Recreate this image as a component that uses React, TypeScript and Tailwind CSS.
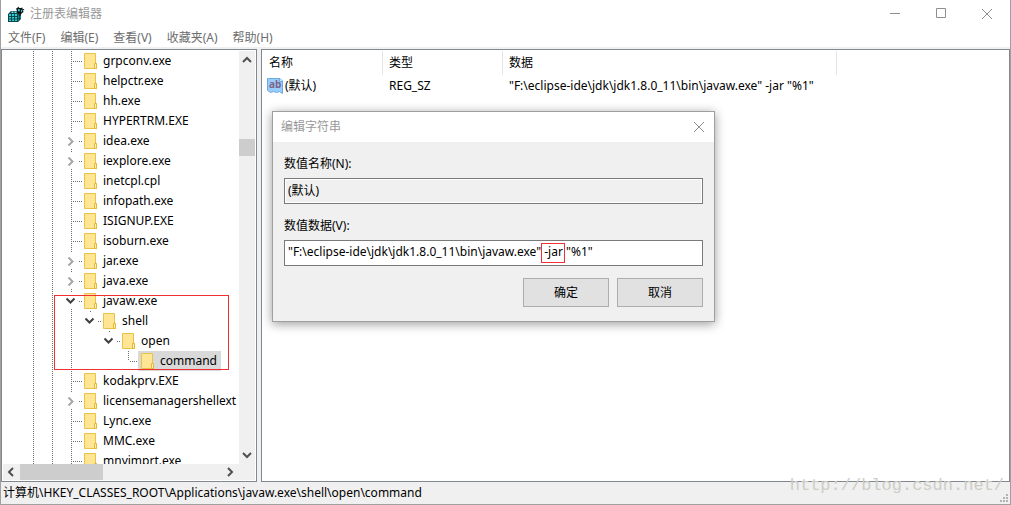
import React, { useState } from 'react';

type Expander = 'none' | 'closed' | 'open';

interface TreeNode {
   name: string;
   depth: number;
   expander: Expander;
   last?: boolean;
   // columns left of this node that still carry a vertical line
   lines: boolean[];
}

const node = (name: string, expander: Expander = 'none'): TreeNode => ({
   name,
   depth: 0,
   expander,
   lines: [true, true],
});

const nodes: TreeNode[] = [
   node('grpconv.exe'),
   node('helpctr.exe'),
   node('hh.exe'),
   node('HYPERTRM.EXE'),
   node('idea.exe', 'closed'),
   node('iexplore.exe', 'closed'),
   node('inetcpl.cpl'),
   node('infopath.exe'),
   node('ISIGNUP.EXE'),
   node('isoburn.exe'),
   node('jar.exe', 'closed'),
   node('java.exe', 'closed'),
   node('javaw.exe', 'open'),
   { name: 'shell', depth: 1, expander: 'open', last: true, lines: [true, true, true] },
   { name: 'open', depth: 2, expander: 'open', last: true, lines: [true, true, true, false] },
   { name: 'command', depth: 3, expander: 'none', last: true, lines: [true, true, true, false, false] },
   node('kodakprv.EXE'),
   node('licensemanagershellext', 'closed'),
   node('Lync.exe'),
   node('MMC.exe'),
   node('mnyimprt.exe'),
];

const menus = ['文件(F)', '编辑(E)', '查看(V)', '收藏夹(A)', '帮助(H)'];

const RegeditIcon = () => (
   <svg viewBox="0 0 17 17" className="h-[17px] w-[17px]" aria-hidden="true">
      <path d="M0 8L3 5H9L10 8L13 9V13L10 16H0Z" fill="#0f4347" />
      <path d="M3.5 5.5H5.5V7H3.5ZM6.5 5.5H8.5V7H6.5Z" fill="#7fe3e6" />
      <path d="M1 8H3V10H1ZM4 8H6V10H4ZM7 8H9V10H7ZM1 11H3V12.5H1ZM4 11H6V12.5H4ZM7 11H9V12.5H7ZM1 13.5H3V15H1ZM4 13.5H6V15H4ZM7 13.5H9V15H7Z" fill="#22d3da" />
      <path d="M10 9.5H11V12H10ZM10 13H11V14.5H10ZM12 10H13V12.5H12Z" fill="#0b8f96" />
      <path d="M8 2.5L9.5 2L10 0.5L11.5 2H13L14.5 1.5V3H16.5L15 4.5L15.5 6L13.5 7.5L12.5 9.5L11 8.5L9 7V5Z" fill="#0a1416" />
      <path d="M10 3L12 3.5L11.5 5.5L10 5ZM13 4L14.5 3.5L14 5.5L13 6.5Z" fill="#35d3da" />
   </svg>
);

const FolderIcon = () => (
   <svg viewBox="0 0 13 16" className="ml-[3px] h-4 w-[13px] shrink-0" aria-hidden="true">
      <path d="M0.5 0.5H11.5V10.5H12.5V15.5H0.5Z" fill="#ffe594" stroke="#e8c34a" />
      <path d="M10.5 15V10.5H12.5V15.5H10.5Z" fill="#fff0b8" stroke="#e5b934" />
   </svg>
);

const StringValueIcon = () => (
   <svg viewBox="0 0 16 16" className="h-4 w-4 shrink-0" aria-hidden="true">
      <path d="M0.5 0.5H13L15.5 3V15.5L12.5 13.5L9.5 14.5L6.5 13.5L3.5 14.5L0.5 12.5Z" fill="#99ccff" stroke="#6ca9dd" />
      <path d="M12.5 0.5V3.5H15.5" fill="#d5eaff" stroke="#6ca9dd" />
      <text x="2" y="10" fontSize="10" fontWeight="700" fill="#7d6488" fontFamily="Noto Sans, sans-serif">ab</text>
   </svg>
);

const CloseIcon = () => (
   <svg viewBox="0 0 12 12" className="h-3 w-3" fill="none" stroke="#8f8f8f" aria-hidden="true">
      <path d="M1 1L11 11M11 1L1 11" />
   </svg>
);

interface ArrowProps {
   d: string;
}

const ScrollArrow: React.FC<ArrowProps> = ({ d }) => (
   <svg viewBox="0 0 16 16" className="h-4 w-4" fill="none" stroke="#505050" strokeWidth="2" aria-hidden="true">
      <path d={d} />
   </svg>
);

const LineCell = ({ visible }: { visible: boolean }) => (
   <svg viewBox="0 0 19 20" className="h-5 w-[19px] shrink-0" aria-hidden="true">
      {visible && <path d="M9.5 0V20" stroke="#6e6e6e" strokeDasharray="1 1" />}
   </svg>
);

// Connector cell right before the folder, with the expand arrow
const Branch = ({ expander, last, isRoot }: { expander: Expander; last?: boolean; isRoot: boolean }) => {
   const dots = { stroke: '#6e6e6e', strokeDasharray: '1 1' };

   return (
      <svg viewBox="0 0 19 20" className="h-5 w-[19px] shrink-0 overflow-visible" fill="none" aria-hidden="true">
         {expander === 'none' ? (
            <>
               <path d={last ? 'M9.5 0V10' : 'M9.5 0V20'} {...dots} />
               <path d="M11 10.5H20" {...dots} />
            </>
         ) : (
            <>
               <path d="M9.5 0V2" {...dots} />
               {isRoot && <path d="M9.5 18V20" {...dots} />}
               <path d="M17 10.5H20" {...dots} />
               {expander === 'closed' ? (
                  <path d="M6.5 6.5L10.5 10.5L6.5 14.5" stroke="#a6a6a6" strokeWidth="2" />
               ) : (
                  <path d="M4.5 7.5L8.5 11.5L12.5 7.5" stroke="#404040" strokeWidth="2" />
               )}
            </>
         )}
      </svg>
   );
};

interface TreeRowProps {
   item: TreeNode;
   selected: boolean;
   onSelect: () => void;
}

const TreeRow: React.FC<TreeRowProps> = ({ item, selected, onSelect }) => (
   <li
      role="treeitem"
      aria-level={item.depth + 1}
      aria-selected={selected}
      aria-expanded={item.expander === 'none' ? undefined : item.expander === 'open'}
      onClick={onSelect}
      className="flex h-5 items-center whitespace-nowrap"
   >
      {item.lines.map((visible, i) => (
         <LineCell key={i} visible={visible} />
      ))}
      <Branch expander={item.expander} last={item.last} isRoot={item.depth === 0} />
      <span className={`flex h-5 items-center pr-1 ${selected ? 'bg-[#d9d9d9]' : ''}`}>
         <FolderIcon />
         <span className="ml-1.5">{item.name}</span>
      </span>
   </li>
);

const RegistryTree = () => {
   const [selected, setSelected] = useState('command');

   return (
      <nav className="flex w-64 shrink-0 flex-col border border-[#828790] bg-white p-px">
         <div className="flex min-h-0 flex-1">
            <div className="relative min-w-0 flex-1 overflow-hidden">
               <ul role="tree" aria-label="注册表项" className="pl-[21px]">
                  {nodes.map((item) => (
                     <TreeRow
                        key={item.name}
                        item={item}
                        selected={selected === item.name}
                        onSelect={() => setSelected(item.name)}
                     />
                  ))}
               </ul>
               <div className="pointer-events-none absolute top-[244px] left-[51px] h-[75px] w-[175px] border border-[#f03030]" />
            </div>
            <div className="flex w-4 flex-col bg-[#f0f0f0]">
               <button type="button" aria-label="向上滚动" className="h-4">
                  <ScrollArrow d="M4 11L8 7L12 11" />
               </button>
               <div className="flex-1 pt-[72px]">
                  <div className="h-[17px] bg-[#cdcdcd]" />
               </div>
               <button type="button" aria-label="向下滚动" className="h-4">
                  <ScrollArrow d="M4 5L8 9L12 5" />
               </button>
            </div>
         </div>
         <div className="flex h-4 bg-[#f0f0f0] pr-4">
            <button type="button" aria-label="向左滚动" className="w-4">
               <ScrollArrow d="M10 4L6 8L10 12" />
            </button>
            <div className="flex-1 pl-px">
               <div className="h-4 w-[83px] bg-[#cdcdcd]" />
            </div>
            <button type="button" aria-label="向右滚动" className="w-4">
               <ScrollArrow d="M5 4L9 8L5 12" />
            </button>
         </div>
      </nav>
   );
};

const ValueTable = () => (
   <table className="w-full table-fixed border-separate border-spacing-0 text-left whitespace-nowrap">
      <colgroup>
         <col className="w-[121px]" />
         <col className="w-[120px]" />
         <col className="w-[334px]" />
         <col />
      </colgroup>
      <thead>
         <tr className="h-6">
            <th className="border-r border-[#e5e5e5] pl-[7px] font-normal">名称</th>
            <th className="border-r border-[#e5e5e5] pl-1.5 font-normal">类型</th>
            <th className="border-r border-[#e5e5e5] pl-1.5 font-normal">数据</th>
            <td />
         </tr>
      </thead>
      <tbody>
         <tr className="h-[22px]">
            <td className="pl-[5px]">
               <span className="flex items-center gap-0.5">
                  <StringValueIcon />
                  (默认)
               </span>
            </td>
            <td className="pl-1.5">REG_SZ</td>
            <td className="pl-1.5">"F:\eclipse-ide\jdk\jdk1.8.0_11\bin\javaw.exe" -jar "%1"</td>
            <td />
         </tr>
      </tbody>
   </table>
);

const EditStringDialog = () => {
   const [value, setValue] = useState('"F:\\eclipse-ide\\jdk\\jdk1.8.0_11\\bin\\javaw.exe" -jar "%1"');

   return (
      <div
         role="dialog"
         aria-label="编辑字符串"
         className="absolute top-[61px] left-2.5 w-[443px] border border-[#9f9f9f] bg-[#f0f0f0] shadow-[0_2px_10px_rgba(0,0,0,0.4)]"
      >
         <div className="flex h-[30px] items-center justify-between bg-white pr-[9px] pl-2">
            <h2 className="text-[#999]">编辑字符串</h2>
            <button type="button" aria-label="关闭">
               <CloseIcon />
            </button>
         </div>
         <form className="flex flex-col px-[11px] pt-3 pb-3.5" onSubmit={(e) => e.preventDefault()}>
            <label htmlFor="value-name" className="h-6 leading-5">数值名称(N):</label>
            <input
               id="value-name"
               readOnly
               value="(默认)"
               className="h-[26px] border border-[#7a7a7a] bg-[#f0f0f0] px-[3px] pb-[3px] shadow-[inset_0_0_0_1px_#fff] outline-none"
            />
            <label htmlFor="value-data" className="mt-3 h-6 leading-5">数值数据(V):</label>
            <div className="relative flex">
               <input
                  id="value-data"
                  value={value}
                  onChange={(e) => setValue(e.target.value)}
                  className="h-[26px] flex-1 border border-[#7a7a7a] bg-white px-[3px] pb-[3px] outline-none"
               />
               <div className="pointer-events-none absolute top-[3px] left-[257px] h-5 w-6 border border-[#f03030]" />
            </div>
            <div className="mt-3 flex justify-end gap-2">
               <button type="submit" className="h-[29px] w-[86px] border border-[#adadad] bg-[#e1e1e1]">确定</button>
               <button type="button" className="h-[29px] w-[86px] border border-[#adadad] bg-[#e1e1e1]">取消</button>
            </div>
         </form>
      </div>
   );
};

const App = () => (
   <div className="relative flex h-screen flex-col border-x border-b border-[#a0a0a0] bg-[#f0f0f0] font-['Noto_Sans','Noto_Sans_CJK_SC',sans-serif] text-xs leading-5 text-black">
      <header className="bg-white">
         <div className="flex h-7 items-center justify-between pl-[7px]">
            <div className="flex items-center gap-[5px]">
               <RegeditIcon />
               <h1 className="text-[#999]">注册表编辑器</h1>
            </div>
            <div className="flex">
               <button type="button" aria-label="最小化" className="flex h-7 w-[46px] items-center justify-center">
                  <svg viewBox="0 0 12 12" className="h-3 w-3" stroke="#8f8f8f"><path d="M1 5.5H11" /></svg>
               </button>
               <button type="button" aria-label="最大化" className="flex h-7 w-[46px] items-center justify-center">
                  <svg viewBox="0 0 12 12" className="h-3 w-3" fill="none" stroke="#8f8f8f"><path d="M1.5 0.5H10.5V9.5H1.5Z" /></svg>
               </button>
               <button type="button" aria-label="关闭" className="flex h-7 w-[46px] items-center justify-center">
                  <CloseIcon />
               </button>
            </div>
         </div>
         <div role="menubar" className="flex h-[19px] items-end gap-[15px] pl-[7px] text-[#6d6d6d]">
            {menus.map((menu) => (
               <button key={menu} type="button" role="menuitem" className="leading-[18px]">{menu}</button>
            ))}
         </div>
      </header>

      <main className="flex min-h-0 flex-1 gap-1 pt-0.5">
         <RegistryTree />
         <section className="relative min-w-0 flex-1 border border-[#828790] bg-white pt-px">
            <ValueTable />
            <EditStringDialog />
         </section>
      </main>

      <footer className="flex h-[22px] items-center pl-0.5">
         计算机\HKEY_CLASSES_ROOT\Applications\javaw.exe\shell\open\command
      </footer>
      <svg viewBox="0 0 8 8" className="absolute right-0.5 bottom-0.5 h-2 w-2" fill="#b4b4b4" aria-hidden="true">
         <path d="M6 0H8V2H6ZM3 3H5V5H3ZM6 3H8V5H6ZM0 6H2V8H0ZM3 6H5V8H3ZM6 6H8V8H6Z" />
      </svg>
      <span className="pointer-events-none absolute right-1.5 bottom-2 font-['Liberation_Mono',monospace] text-[17px] text-[#cdcdc6]">
         http://blog.csdn.net/
      </span>
   </div>
);

export default App;
